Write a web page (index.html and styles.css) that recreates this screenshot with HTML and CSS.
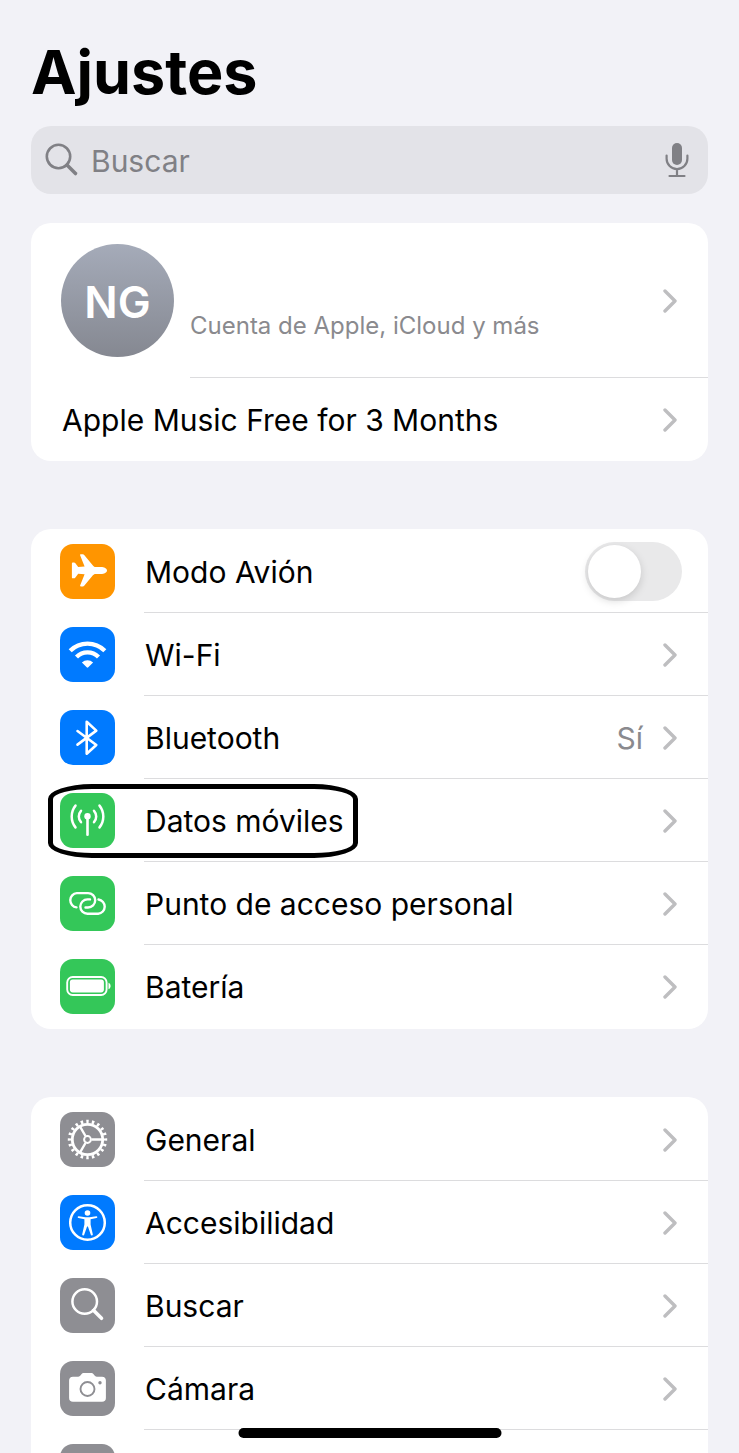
FILE: index.html
```html
<!DOCTYPE html>
<html lang="es">
<head>
<meta charset="utf-8">
<meta name="viewport" content="width=device-width, initial-scale=1">
<title>Ajustes</title>
<link rel="stylesheet" href="styles.css">
</head>
<body>
<svg class="defs" aria-hidden="true">
  <symbol id="chevron" viewBox="0 0 14 24">
    <path d="M2 2 12 12 2 22" fill="none" stroke="currentColor" stroke-width="3.400" stroke-linecap="round" stroke-linejoin="round"/>
  </symbol>
</svg>
<main class="screen">
  <h1 class="title">Ajustes</h1>

  <label class="search">
    <svg class="search-glass" viewBox="0 0 34 34" aria-hidden="true">
      <circle cx="13.500" cy="13.500" r="11.700" fill="none" stroke="currentColor" stroke-width="2.600"/>
      <path d="M22 22 30.500 30.500" stroke="currentColor" stroke-width="3.600" stroke-linecap="round"/>
    </svg>
    <input class="search-input" type="text" placeholder="Buscar" aria-label="Buscar">
    <button class="mic" type="button" aria-label="Dictar">
      <svg viewBox="0 0 24 36" aria-hidden="true">
        <rect x="7" y="1" width="10" height="22" rx="5" fill="currentColor"/>
        <path d="M1.600 13.500v3.200a10.400 10.400 0 0 0 20.800 0v-3.200M12 27v6M4.500 34h15" fill="none" stroke="currentColor" stroke-width="2.200" stroke-linecap="round"/>
      </svg>
    </button>
  </label>

  <section class="card profile">
    <a class="row account" href="#">
      <span class="avatar">NG</span>
      <span class="body">
        <span class="account-note">Cuenta de Apple, iCloud y más</span>
        <svg class="chevron" aria-hidden="true"><use href="#chevron"/></svg>
      </span>
    </a>
    <a class="row" href="#">
      <span class="body">
        <span class="label">Apple Music Free for 3 Months</span>
        <svg class="chevron" aria-hidden="true"><use href="#chevron"/></svg>
      </span>
    </a>
  </section>

  <section class="card list">
    <label class="row">
      <svg class="icon orange" viewBox="0 0 55 55" aria-hidden="true">
        <path fill="#fff" d="M47 26.400c0-2.100-3-3.500-6-3.500h-5.200c-1.300 0-1.900-.3-2.700-1.200L24.200 11c-.4-.5-.8-.7-1.400-.7h-1.900c-.7 0-1 .5-.7 1.200L24.600 22.600l-6.400.5-3-4c-.3-.4-.7-.6-1.200-.6h-1.200c-.6 0-.9.4-.9.9v14c0 .5.300.9.900.9H14c.5 0 .9-.2 1.200-.6l3-4 6.400.5-4.400 11.100c-.3.700 0 1.200.700 1.200h1.900c.6 0 1-.2 1.400-.7l8.900-10.700c.8-.9 1.400-1.200 2.700-1.200H41c3 0 6-1.400 6-3.500z"/>
      </svg>
      <span class="body">
        <span class="label">Modo Avión</span>
        <input class="switch" type="checkbox" role="switch">
      </span>
    </label>
    <a class="row" href="#">
      <svg class="icon blue" viewBox="0 0 55 55" aria-hidden="true">
        <path d="M10.200 23.700a24.500 24.500 0 0 1 34.600 0M16.500 30a15.500 15.500 0 0 1 22 0" fill="none" stroke="#fff" stroke-width="4.300"/>
        <path d="M26.700 40.300 21.900 35.500a8.300 8.300 0 0 1 11.200 0L28.300 40.300a1.100 1.100 0 0 1-1.600 0z" fill="#fff"/>
      </svg>
      <span class="body">
        <span class="label">Wi-Fi</span>
        <svg class="chevron" aria-hidden="true"><use href="#chevron"/></svg>
      </span>
    </a>
    <a class="row" href="#">
      <svg class="icon blue" viewBox="0 0 55 55" aria-hidden="true">
        <path d="M17.500 21 36.300 35 26.700 43.700V11.800L36.300 20.600 17.500 34.600" fill="none" stroke="#fff" stroke-width="2.600" stroke-linecap="round" stroke-linejoin="round"/>
      </svg>
      <span class="body">
        <span class="label">Bluetooth</span>
        <span class="value">Sí</span>
        <svg class="chevron" aria-hidden="true"><use href="#chevron"/></svg>
      </span>
    </a>
    <a class="row marked" href="#">
      <svg class="icon green" viewBox="0 0 55 55" aria-hidden="true">
        <circle cx="27.500" cy="23.300" r="3.200" fill="#fff"/>
        <path d="M27.500 24v17.800" stroke="#fff" stroke-width="2.600" stroke-linecap="round"/>
        <path d="M21 17.800a8.500 8.500 0 0 0 0 11.400M34 17.800a8.500 8.500 0 0 1 0 11.400M15.500 12.600a17.500 17.500 0 0 0 0 21.800M39.500 12.600a17.500 17.500 0 0 1 0 21.800" fill="none" stroke="#fff" stroke-width="2.500" stroke-linecap="round"/>
      </svg>
      <span class="body">
        <span class="label">Datos móviles</span>
        <svg class="chevron" aria-hidden="true"><use href="#chevron"/></svg>
      </span>
    </a>
    <a class="row" href="#">
      <svg class="icon green" viewBox="0 0 55 55" aria-hidden="true">
        <path d="M16.500 31.400a7.200 7.200 0 0 1 .3-14.300H28a7.200 7.200 0 0 1 0 14.400H25.500" fill="none" stroke="#fff" stroke-width="2.400" stroke-linecap="round"/>
        <path d="M38.500 23.500a7.200 7.200 0 0 1 -.3 14.300H27.500a7.200 7.200 0 0 1 0-14.400H30" fill="none" stroke="#fff" stroke-width="2.400" stroke-linecap="round"/>
      </svg>
      <span class="body">
        <span class="label">Punto de acceso personal</span>
        <svg class="chevron" aria-hidden="true"><use href="#chevron"/></svg>
      </span>
    </a>
    <a class="row" href="#">
      <svg class="icon green" viewBox="0 0 55 55" aria-hidden="true">
        <rect x="7.200" y="18" width="39.400" height="18" rx="5.500" fill="none" stroke="#fff" stroke-width="1.900"/>
        <rect x="9.900" y="20.600" width="34" height="12.800" rx="2.800" fill="#fff"/>
        <path d="M48.500 23.700c1.300.5 2.100 1.800 2.100 3.300s-.8 2.800-2.100 3.300z" fill="#fff"/>
      </svg>
      <span class="body">
        <span class="label">Batería</span>
        <svg class="chevron" aria-hidden="true"><use href="#chevron"/></svg>
      </span>
    </a>
  </section>

  <section class="card list">
    <a class="row" href="#">
      <svg class="icon gray" viewBox="0 0 55 55" aria-hidden="true">
        <g fill="none" stroke="#fff">
          <circle cx="27.500" cy="27.500" r="15.200" stroke-width="2.800"/>
          <circle cx="27.500" cy="27.500" r="18" stroke-width="3.400" pathLength="60" stroke-dasharray="1.300 1.700" stroke-dashoffset=".65"/>
          <circle cx="27.500" cy="27.500" r="3.400" stroke-width="2"/>
          <path d="M31.500 27.500H42M25.500 24 20.200 14.800M25.500 31 20.200 40.200" stroke-width="2.400"/>
        </g>
      </svg>
      <span class="body">
        <span class="label">General</span>
        <svg class="chevron" aria-hidden="true"><use href="#chevron"/></svg>
      </span>
    </a>
    <a class="row" href="#">
      <svg class="icon blue" viewBox="0 0 55 55" aria-hidden="true">
        <circle cx="27.500" cy="27.500" r="17.300" fill="none" stroke="#fff" stroke-width="2.500"/>
        <circle cx="27.500" cy="18" r="2.800" fill="#fff"/>
        <path d="M18.700 21.300 25.500 22.200h4L36.300 21.300a.9.900 0 0 1 .2 1.800L30.600 24.300V29.500L32.800 39.300a1 1 0 0 1-2 .5L27.900 31.500h-.8L24.200 39.800a1 1 0 0 1-2-.5L24.400 29.500V24.300L18.500 23.100a.9.900 0 0 1 .2-1.800z" fill="#fff"/>
      </svg>
      <span class="body">
        <span class="label">Accesibilidad</span>
        <svg class="chevron" aria-hidden="true"><use href="#chevron"/></svg>
      </span>
    </a>
    <a class="row" href="#">
      <svg class="icon gray" viewBox="0 0 55 55" aria-hidden="true">
        <circle cx="24.700" cy="23.500" r="12.300" fill="none" stroke="#fff" stroke-width="2.500"/>
        <path d="M33.700 32.500 41.500 40.300" stroke="#fff" stroke-width="3.600" stroke-linecap="round"/>
      </svg>
      <span class="body">
        <span class="label">Buscar</span>
        <svg class="chevron" aria-hidden="true"><use href="#chevron"/></svg>
      </span>
    </a>
    <a class="row" href="#">
      <svg class="icon gray" viewBox="0 0 55 55" aria-hidden="true">
        <path d="M13 15.700h5.300c1 0 1.500-.3 2.100-1.100l1-1.300c.7-.9 1.400-1.300 2.600-1.300h7c1.200 0 1.900.4 2.600 1.300l1 1.300c.6.8 1.100 1.100 2.100 1.100H42c2.500 0 3.900 1.400 3.900 3.800v17.400c0 2.500-1.400 3.800-3.900 3.800H13c-2.500 0-3.900-1.300-3.900-3.800V19.500c0-2.400 1.400-3.800 3.900-3.800z" fill="#fff"/>
        <circle cx="27.500" cy="28" r="7" fill="none" stroke="#8e8e93" stroke-width="1.900"/>
        <circle cx="40" cy="21.700" r="1.700" fill="#8e8e93"/>
      </svg>
      <span class="body">
        <span class="label">Cámara</span>
        <svg class="chevron" aria-hidden="true"><use href="#chevron"/></svg>
      </span>
    </a>
    <div class="row">
      <span class="icon gray"></span>
      <span class="body"></span>
    </div>
  </section>
</main>
<div class="home-bar"></div>
</body>
</html>
```

FILE: styles.css
```css
*,
*::before,
*::after {
  box-sizing: border-box;
}

body {
  margin: 0;
  height: 100vh;
  overflow: hidden;
  background: #f2f2f7;
  color: #000;
  font-family: Inter, "Liberation Sans", sans-serif;
  font-size: 30px;
  line-height: 40px;
}

.defs {
  position: absolute;
  width: 0;
  height: 0;
}

.screen {
  padding: 32px 31px 0;
}

.title {
  margin: 0 0 14px;
  font-size: 61px;
  font-weight: 700;
  line-height: 80px;
}

.search {
  display: flex;
  align-items: center;
  height: 68px;
  margin-bottom: 29px;
  padding: 0 19px 0 14px;
  border-radius: 20px;
  background: #e3e3e8;
  color: #808085;
}

.search-glass {
  flex: none;
  width: 34px;
  height: 34px;
}

.search-input {
  flex: 1;
  min-width: 0;
  padding: 2px 0 0 12px;
  border: 0;
  outline: 0;
  background: none;
  color: inherit;
  font: inherit;
}

.search-input::placeholder {
  color: #808085;
  opacity: 1;
}

.mic {
  flex: none;
  width: 24px;
  height: 36px;
  padding: 0;
  border: 0;
  background: none;
  color: inherit;
}

.mic svg {
  display: block;
}

.card {
  margin-bottom: 68px;
  border-radius: 20px;
  background: #fff;
}

.list {
  padding: 1px 0;
}

.row {
  position: relative;
  display: flex;
  align-items: center;
  gap: 29px;
  min-height: 83px;
  padding-left: 29px;
  color: inherit;
  text-decoration: none;
}

.profile .row {
  padding-left: 30px;
}

.body {
  display: flex;
  flex: 1;
  align-items: center;
  align-self: stretch;
  gap: 20px;
  padding: 1px 31px 0 0;
  border-bottom: 1px solid #dcdcde;
}

.row:last-child .body {
  border-bottom-color: transparent;
}

.label,
.account-note {
  flex: 1;
}

.label {
  padding: 1px 0 0 1px;
}

.value {
  color: #8a8a8e;
}

.chevron {
  flex: none;
  width: 14px;
  height: 24px;
  color: #bebec0;
}

.icon {
  flex: none;
  width: 55px;
  height: 55px;
  border-radius: 13px;
}

.orange {
  background: #ff9500;
}

.blue {
  background: #007aff;
}

.green {
  background: #34c759;
}

.gray {
  background: #8e8e93;
}

.profile .account {
  gap: 16px;
  min-height: 155px;
}

.avatar {
  display: grid;
  place-items: center;
  width: 113px;
  height: 113px;
  padding-top: 3px;
  border-radius: 50%;
  background: linear-gradient(#a5abb9, #858891);
  color: #fff;
  font-size: 44px;
  font-weight: 600;
}

.account-note {
  padding-top: 50px;
  color: #8a8a8e;
  font-size: 24px;
}

.switch {
  appearance: none;
  display: flex;
  width: 97px;
  height: 59px;
  margin: 0 -5px 0 0;
  padding: 3px;
  border-radius: 30px;
  background: #e9e9ea;
}

.switch::before {
  content: "";
  width: 53px;
  height: 53px;
  border-radius: 50%;
  background: #fff;
  box-shadow: 0 3px 8px rgba(0, 0, 0, 0.15);
}

.switch:checked {
  justify-content: flex-end;
  background: #34c759;
}

.marked::after {
  content: "";
  position: absolute;
  top: 5px;
  bottom: 4px;
  left: 17px;
  width: 310px;
  border: 5px solid #000;
  border-radius: 44px / 15px;
}

.home-bar {
  position: fixed;
  bottom: 15px;
  left: 50%;
  width: 263px;
  height: 10px;
  border-radius: 5px;
  background: #000;
  transform: translateX(-50%);
}
```
